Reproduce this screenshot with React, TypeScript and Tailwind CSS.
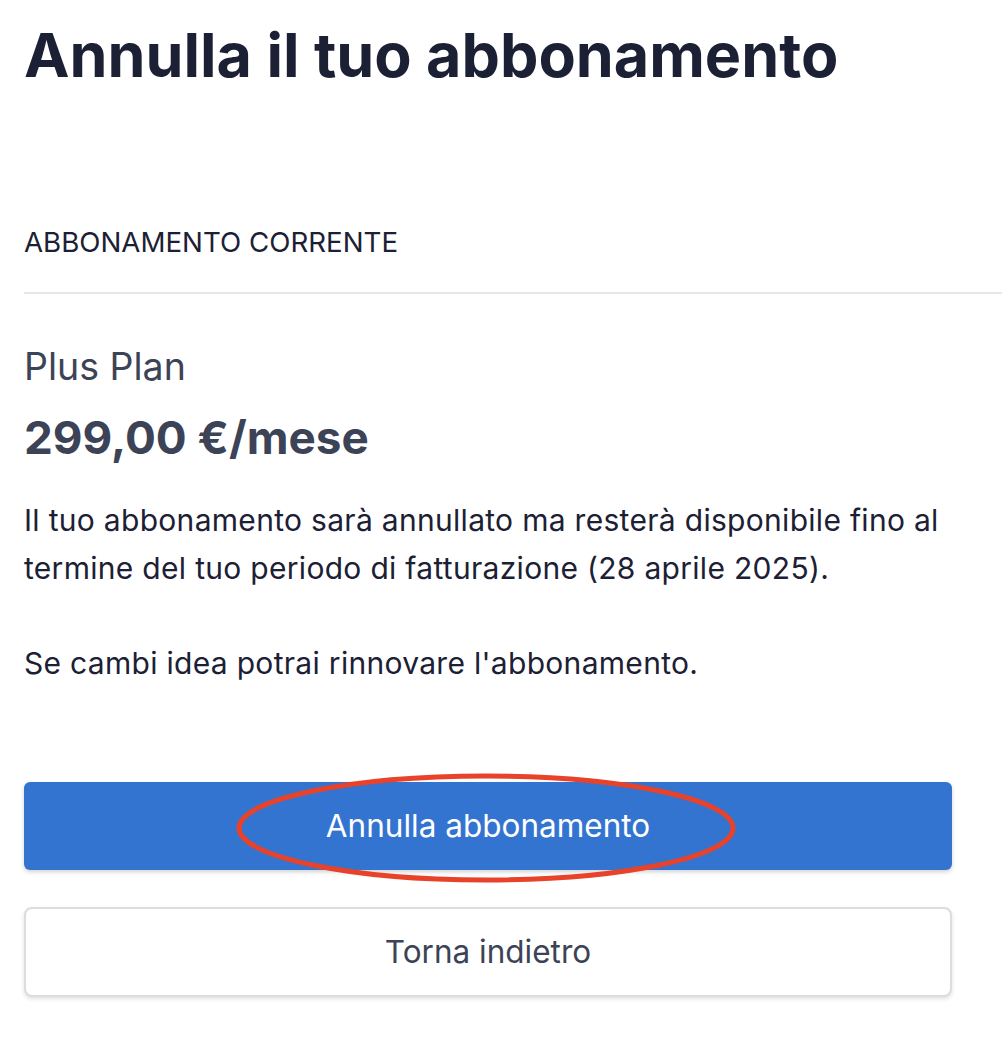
import React from 'react';

const App = () => {
    return (
        <div className="min-h-screen bg-white text-[#1c2035]" style={{ fontFamily: 'Inter, "Noto Sans", sans-serif' }}>
            <div className="pl-6">
                <h1 className="pt-[21px] text-[61px] leading-[68px] font-bold text-[#1c2035]">
                    Annulla il tuo abbonamento
                </h1>

                <div className="mt-[138px] text-[27.7px] leading-[30px] text-[#1c2035]">ABBONAMENTO CORRENTE</div>
                <div className="mt-[35px] h-[2px] bg-[#e5e7eb]" />

                <div className="w-[928px]">
                    <div className="mt-[51px] text-[37.5px] leading-[44px] text-[#3d4356]">Plus Plan</div>
                    <div className="mt-[24px] text-[45.8px] leading-[50px] font-bold text-[#3d4356]">299,00 €/mese</div>

                    <p className="mt-[33px] text-[30px] leading-[48px] tracking-[0.3px] text-[#1c2035]">
                        Il tuo abbonamento sarà annullato ma resterà disponibile fino al termine del tuo periodo di fatturazione (28 aprile 2025).
                    </p>
                    <p className="mt-[47px] text-[30px] leading-[48px] tracking-[0.3px] text-[#1c2035]">
                        Se cambi idea potrai rinnovare l'abbonamento.
                    </p>

                    <div className="relative mt-[95px]">
                        <button
                            type="button"
                            className="flex h-[88px] w-full items-center justify-center rounded-[6px] bg-[#3374d0] text-[31.5px] text-white shadow-[0_2px_4px_rgba(0,0,0,0.18)]"
                        >
                            Annulla abbonamento
                        </button>
                        <svg
                            className="pointer-events-none absolute left-[212px] top-[-10px]"
                            width="504"
                            height="112"
                            viewBox="0 0 504 112"
                        >
                            <ellipse cx="250" cy="56" rx="247" ry="52" fill="none" stroke="#e8432a" strokeWidth="5" />
                        </svg>
                    </div>

                    <button
                        type="button"
                        className="mt-[37px] flex h-[90px] w-full items-center justify-center rounded-[8px] border-2 border-[#dcdce2] bg-white text-[31.5px] text-[#3d4356] shadow-[0_2px_4px_rgba(0,0,0,0.12)]"
                    >
                        Torna indietro
                    </button>
                </div>
            </div>
        </div>
    );
};

export default App;
